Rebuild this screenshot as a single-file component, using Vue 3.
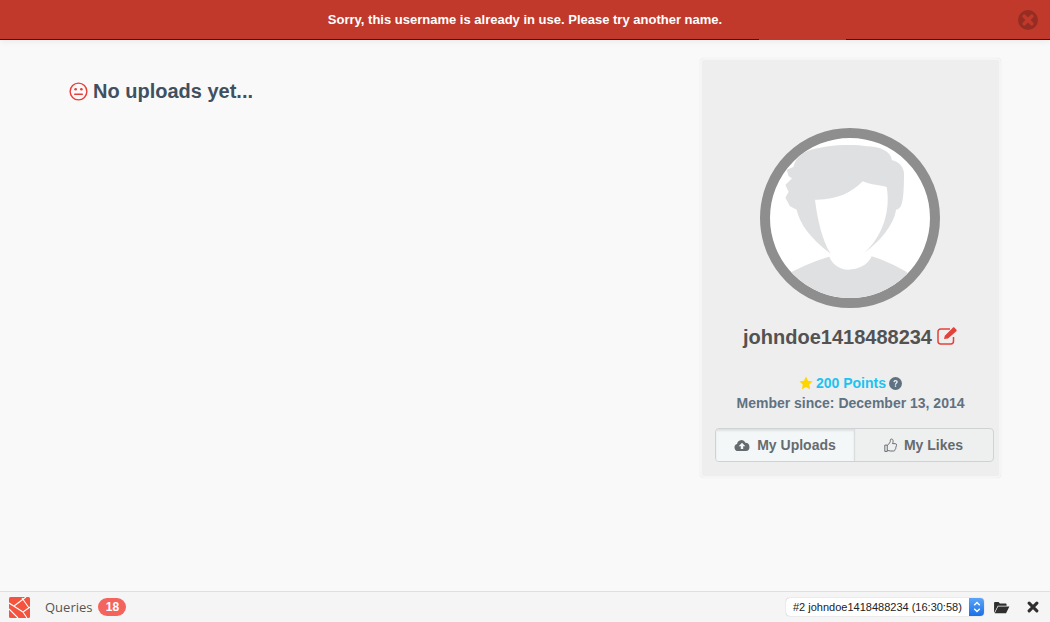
<script setup>
const title = 'johndoe1418488234'
</script>

<template>
  <div class="page">
    <header class="banner">
      <span class="banner-text">Sorry, this username is already in use. Please try another name.</span>
      <button class="close" aria-label="Close">
        <svg viewBox="0 0 20 20" width="20" height="20">
          <circle cx="10" cy="10" r="10" fill="#962d22" />
          <path d="M6.200 6.200 13.800 13.800M13.800 6.200 6.200 13.800" stroke="#c0392b" stroke-width="3.600" stroke-linecap="round" />
        </svg>
      </button>
      <span class="tab-notch"></span>
    </header>

    <main class="content">
      <section class="uploads">
        <h2 class="empty">
          <svg class="meh" viewBox="0 0 20 20" width="19" height="19">
            <circle cx="10" cy="10" r="8.800" fill="none" stroke="#e5403a" stroke-width="1.500" />
            <circle cx="7" cy="7.600" r="1.400" fill="#e5403a" />
            <circle cx="13" cy="7.600" r="1.400" fill="#e5403a" />
            <path d="M6 12.900h8" stroke="#e5403a" stroke-width="1.500" stroke-linecap="round" />
          </svg>
          <span>No uploads yet...</span>
        </h2>
      </section>

      <aside class="card">
        <svg class="avatar" viewBox="60 55 540 540" width="180" height="180">
          <defs>
            <clipPath id="inner"><circle cx="330" cy="325" r="240" /></clipPath>
          </defs>
          <circle cx="330" cy="325" r="255" fill="#fff" stroke="#8e8e8e" stroke-width="30" />
          <g clip-path="url(#inner)" fill="#dfe0e2">
            <path d="M272 432C248 395 232 330 225 270C285 272 335 250 368 215C395 226 420 226 440 232C452 300 430 380 372 430C420 395 462 345 468 300C485 298 492 280 492 190C490 170 475 155 456 152C452 125 420 110 380 110C340 102 250 105 200 125C175 135 165 155 160 172L140 180L146 200L156 206L136 226L146 246L136 264L150 290L170 300C178 340 210 385 272 432Z" />
            <path d="M120 600V505L155 487C190 468 235 450 268 441C275 462 300 480 325 480C355 480 385 465 395 440C430 450 470 470 500 487L540 600Z" />
          </g>
        </svg>

        <div class="name-row">
          <span class="name">{{ title }}</span>
          <svg viewBox="0 0 21 19" width="21" height="19" class="edit">
            <path d="M16.500 11v4.300a2.700 2.700 0 0 1-2.700 2.700H3.700A2.700 2.700 0 0 1 1 15.300V5.700A2.700 2.700 0 0 1 3.700 3H13" fill="none" stroke="#e5403a" stroke-width="1.500" />
            <path d="M7 13l.8-3.300L15.800 1.700c.5-.5 1.200-.5 1.700 0l1.800 1.800c.5.500.5 1.200 0 1.700L11 12.400z" fill="#e5403a" />
          </svg>
        </div>

        <div class="points-row">
          <svg viewBox="0 0 20 20" width="14" height="14">
            <path d="M10 .8l2.900 6 6.500.9-4.700 4.600 1.100 6.500L10 15.700l-5.800 3.100 1.100-6.500L.6 7.700l6.500-.9z" fill="#ffd500" />
          </svg>
          <span class="points">200 Points</span>
          <svg viewBox="0 0 20 20" width="13" height="13">
            <circle cx="10" cy="10" r="10" fill="#5f7282" />
            <path d="M6.800 7.600C7 5.500 8.500 4.700 10.100 4.700c2 0 3.300 1.200 3.300 2.800 0 2.400-2.500 2.400-2.500 4.300H9c0-2.900 2.300-2.900 2.300-4.200 0-.6-.5-1-1.200-1-.8 0-1.300.4-1.400 1.300z" fill="#eee" />
            <rect x="9" y="12.900" width="2" height="2.200" fill="#eee" />
          </svg>
        </div>
        <div class="since">Member since: December 13, 2014</div>

        <div class="tabs">
          <button class="tab active">
            <svg viewBox="0 0 20 16" width="16" height="13">
              <path d="M5 15a4.500 4.500 0 0 1-1.200-8.800A5.500 5.500 0 0 1 14.300 4.500 5.300 5.300 0 0 1 15 15zM10 4.500 5.800 9h2.700v3.500h3V9h2.700z" fill="#666b6f" fill-rule="evenodd" />
            </svg>
            My Uploads
          </button>
          <button class="tab">
            <svg viewBox="0 0 16 18" width="13" height="15">
              <path d="M1 8.500h3v7.800H1zM4 9l3-3.200c.7-1 .8-2 .8-3.300C7.800 1.500 8.500 1 9.300 1c1.300 0 1.900 1.300 1.900 2.800 0 1.100-.4 2-.8 2.900h3.400c1 0 1.700.7 1.700 1.600 0 .5-.2 1-.6 1.300.3.900.1 1.700-.5 2.200.2.900-.1 1.600-.7 2 0 1.200-.8 2-2 2H8c-1.500 0-2.400-.8-4-.8" fill="none" stroke="#666b6f" stroke-width="1.200" />
            </svg>
            My Likes
          </button>
        </div>
      </aside>
    </main>

    <footer class="debugbar">
      <svg class="logo" viewBox="0 0 21 21" width="21" height="21">
        <rect width="21" height="21" rx="1.500" fill="#f4533d" />
        <path d="M0 6 14 15 21 10M5 9 17 0M13 1 20 11M0 12 9 21M14 15 18 21" fill="none" stroke="#fff" stroke-width="1.100" />
      </svg>
      <span class="queries">Queries</span>
      <span class="badge">18</span>
      <div class="spacer"></div>
      <div class="select">
        <span class="select-text">#2 johndoe1418488234 (16:30:58)</span>
        <span class="select-arrow">
          <svg viewBox="0 0 10 14" width="10" height="14">
            <path d="M2.200 5.300 5 2.500l2.800 2.800M2.200 8.700 5 11.500l2.800-2.800" fill="none" stroke="#fff" stroke-width="1.400" />
          </svg>
        </span>
      </div>
      <svg class="folder" viewBox="0 0 18 14" width="17" height="13">
        <path d="M1 13V2.200C1 1.500 1.500 1 2.200 1h3.600l1.500 1.800h6c.7 0 1.200.5 1.200 1.200v1H5L1 13zM5.400 6H17.500l-3.600 7.200H1.700z" fill="#2f2f2f" />
      </svg>
      <svg class="times" viewBox="0 0 14 14" width="12" height="12">
        <path d="M2.500 2.500l9 9M11.500 2.500l-9 9" stroke="#2f2f2f" stroke-width="3.600" stroke-linecap="round" />
      </svg>
    </footer>
  </div>
</template>

<style scoped>
.page {
  height: 622px;
  display: flex;
  flex-direction: column;
  background: #f9f9f9;
  font-family: "Liberation Sans", Arial, sans-serif;
  overflow: hidden;
}
.banner {
  position: relative;
  height: 39px;
  flex: none;
  display: flex;
  align-items: center;
  justify-content: center;
  background: #c0392b;
  border-bottom: 1px solid #3a1a16;
  box-shadow: 0 2px 6px rgba(0, 0, 0, 0.06);
}
.banner-text {
  color: #fff;
  font-size: 13px;
  font-weight: 700;
}
.close {
  position: absolute;
  right: 12px;
  top: 10px;
  border: 0;
  padding: 0;
  background: none;
  display: flex;
}
.tab-notch {
  position: absolute;
  left: 759px;
  top: 39px;
  width: 87px;
  height: 1px;
  background: #c0392b;
}
.content {
  flex: 1;
  display: flex;
  justify-content: space-between;
  align-items: flex-start;
  padding: 18px 49px 0 69px;
  min-height: 0;
}
.uploads {
  padding-top: 20px;
}
.empty {
  margin: 0;
  display: flex;
  align-items: center;
  gap: 5px;
  color: #3f5060;
  font-size: 20px;
  line-height: 26px;
  font-weight: 700;
}
.card {
  box-sizing: border-box;
  width: 301px;
  height: 420px;
  display: flex;
  flex-direction: column;
  align-items: center;
  background: #eeeeee;
  border: 2px solid #f5f5f5;
  border-radius: 4px;
  box-shadow: 0 0 1px rgba(0, 0, 0, 0.12);
  padding: 68px 0 0;
}
.avatar {
  display: block;
  flex: none;
  margin-right: 1px;
}
.name-row {
  margin-top: 16px;
  height: 26px;
  display: flex;
  align-items: center;
  gap: 5px;
}
.name {
  color: #525252;
  font-size: 20px;
  font-weight: 700;
}
.edit {
  margin-bottom: 3px;
}
.points-row {
  margin-top: 24px;
  display: flex;
  align-items: center;
  gap: 3px;
  height: 18px;
}
.points {
  color: #1cc3f0;
  font-size: 14px;
  font-weight: 700;
}
.since {
  margin-top: 2px;
  color: #5f7282;
  font-size: 14px;
  line-height: 19px;
  font-weight: 700;
}
.tabs {
  box-sizing: border-box;
  margin-top: 15px;
  align-self: flex-start;
  margin-left: 13px;
  width: 279px;
  height: 34px;
  display: flex;
  border: 1px solid #cfd2d3;
  border-radius: 4px;
  background: #eef0f0;
  overflow: hidden;
  flex: none;
}
.tab {
  flex: 1;
  border: 0;
  background: none;
  padding: 0;
  display: flex;
  align-items: center;
  justify-content: center;
  gap: 7px;
  color: #666b6f;
  font-family: inherit;
  font-size: 14px;
  font-weight: 700;
}
.tab.active {
  flex: none;
  width: 138px;
  background: #f4f7f8;
  box-shadow: inset 0 2px 2px rgba(0, 0, 0, 0.09), 1px 0 1px rgba(0, 0, 0, 0.08);
}
.debugbar {
  box-sizing: border-box;
  height: 31px;
  flex: none;
  display: flex;
  align-items: center;
  background: #f5f5f5;
  border-top: 1px solid #dfdfdf;
  padding: 0 11px 0 9px;
}
.logo {
  flex: none;
}
.queries {
  margin-left: 15px;
  color: #555;
  font-family: "Open Sans", sans-serif;
  font-size: 13px;
}
.badge {
  margin-left: 6px;
  height: 18px;
  width: 28px;
  border-radius: 9px;
  background: #f4645f;
  color: #fff;
  font-size: 12px;
  font-weight: 700;
  line-height: 18px;
  text-align: center;
}
.spacer {
  flex: 1;
}
.select {
  box-sizing: border-box;
  width: 198px;
  height: 18px;
  display: flex;
  background: #fff;
  border-radius: 4px;
  box-shadow: 0 0 1px rgba(0, 0, 0, 0.4);
  overflow: hidden;
}
.select-text {
  flex: 1;
  min-width: 0;
  padding-left: 7px;
  margin-right: 5px;
  overflow: hidden;
  white-space: nowrap;
  color: #222;
  font-size: 11px;
  line-height: 18px;
}
.select-arrow {
  flex: none;
  width: 15px;
  display: flex;
  align-items: center;
  justify-content: center;
  background: linear-gradient(#5aa5f8, #1b6fe8);
}
.folder {
  margin-left: 9px;
  flex: none;
}
.times {
  margin-left: 17px;
  flex: none;
}
</style>
